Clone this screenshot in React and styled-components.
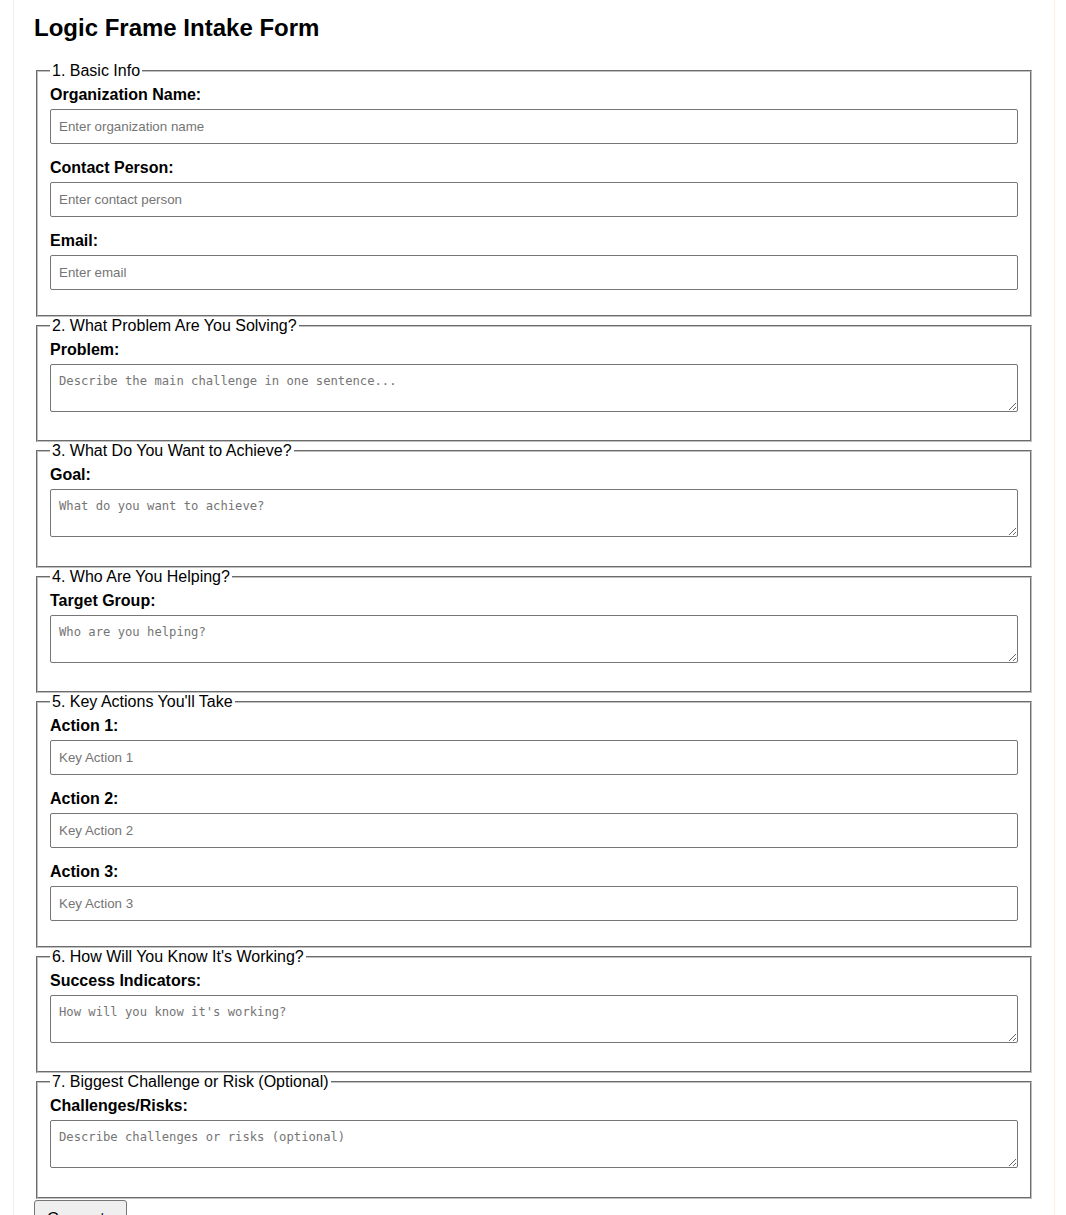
import React from 'react';
import styled, { createGlobalStyle } from 'styled-components';

const GlobalStyle = createGlobalStyle`
  body {
    margin: 0;
    background: #fff;
    font-family: "Liberation Sans", Arial, sans-serif;
    color: #000;
  }
`;

const Page = styled.div`
  box-sizing: border-box;
  width: 1042px;
  min-height: 100vh;
  margin-left: calc(50% - 520px);
  padding: 14px 20px 20px;
  border-left: 1px solid #f4ece6;
  border-right: 1px solid #fdf0dd;
  background: #fff;
`;

const Title = styled.h2`
  margin: 0 0 20px;
  font-size: 24px;
  font-weight: bold;
`;

const Section = styled.fieldset`
  margin: 0 2px;
  padding: 6px 12px 9.5px;
  border: 2px groove rgb(192, 192, 192);
  min-width: 0;
`;

const Legend = styled.legend`
  padding: 0 2px;
  font-size: 16px;
`;

const Label = styled.label`
  display: block;
  margin-bottom: 5px;
  font-size: 16px;
  font-weight: bold;
`;

const TextInput = styled.input`
  display: block;
  box-sizing: border-box;
  width: 100%;
  height: 35px;
  margin: 0 0 15px;
  padding: 8px;
  border: 1px solid #767676;
  border-radius: 2px;
  font-family: "Liberation Sans", Arial, sans-serif;
  font-size: 13.333px;
  &::placeholder {
    color: #757575;
  }
`;

const TextArea = styled.textarea`
  display: block;
  box-sizing: border-box;
  width: 100%;
  height: 48px;
  margin: 0 0 19px;
  padding: 9px 8px 8px;
  border: 1px solid #767676;
  border-radius: 2px;
  font-family: "DejaVu Sans Mono", "Liberation Mono", monospace;
  font-size: 12.2px;
  &::placeholder {
    color: #757575;
  }
`;

const Button = styled.button`
  margin-top: 1px;
  padding: 9px 12px;
  background: #efefef;
  border: 1px solid #767676;
  border-radius: 3px;
  font-family: "Liberation Sans", Arial, sans-serif;
  font-size: 16px;
  color: #000;
`;

const sections = [
  {
    title: '1. Basic Info',
    fields: [
      { label: 'Organization Name:', placeholder: 'Enter organization name' },
      { label: 'Contact Person:', placeholder: 'Enter contact person' },
      { label: 'Email:', placeholder: 'Enter email' },
    ],
  },
  {
    title: '2. What Problem Are You Solving?',
    fields: [{ label: 'Problem:', placeholder: 'Describe the main challenge in one sentence...', area: true }],
  },
  {
    title: '3. What Do You Want to Achieve?',
    fields: [{ label: 'Goal:', placeholder: 'What do you want to achieve?', area: true }],
  },
  {
    title: '4. Who Are You Helping?',
    fields: [{ label: 'Target Group:', placeholder: 'Who are you helping?', area: true }],
  },
  {
    title: "5. Key Actions You'll Take",
    fields: [
      { label: 'Action 1:', placeholder: 'Key Action 1' },
      { label: 'Action 2:', placeholder: 'Key Action 2' },
      { label: 'Action 3:', placeholder: 'Key Action 3' },
    ],
  },
  {
    title: "6. How Will You Know It's Working?",
    fields: [{ label: 'Success Indicators:', placeholder: "How will you know it's working?", area: true }],
  },
  {
    title: '7. Biggest Challenge or Risk (Optional)',
    fields: [{ label: 'Challenges/Risks:', placeholder: 'Describe challenges or risks (optional)', area: true }],
  },
];

const App = () => (
  <>
    <GlobalStyle />
    <Page>
      <Title>Logic Frame Intake Form</Title>
      <form onSubmit={e => e.preventDefault()}>
        {sections.map(s => (
          <Section key={s.title}>
            <Legend>{s.title}</Legend>
            {s.fields.map(f => (
              <React.Fragment key={f.label}>
                <Label>{f.label}</Label>
                {f.area ? (
                  <TextArea placeholder={f.placeholder} />
                ) : (
                  <TextInput type="text" placeholder={f.placeholder} />
                )}
              </React.Fragment>
            ))}
          </Section>
        ))}
        <Button type="submit">Generate</Button>
      </form>
    </Page>
  </>
);

export default App;
